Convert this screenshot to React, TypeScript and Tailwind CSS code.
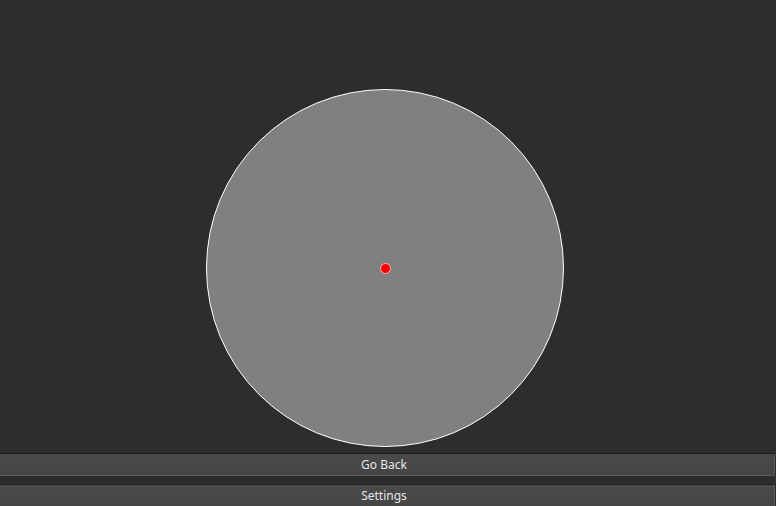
export default function App() {
  return (
    <div className="h-[506px] w-[776px] overflow-hidden bg-[#2d2d2d] flex flex-col font-['Noto_Sans',sans-serif]">
      {/* Canvas */}
      <div className="flex justify-center pr-[6px] pt-[89px]">
        <div className="w-[358px] h-[358px] rounded-full bg-[#808080] border border-white flex items-center justify-center">
          <div className="w-[11px] h-[11px] rounded-full bg-[#ff0000] border border-[#ffb0b0]" />
        </div>
      </div>

      {/* Buttons */}
      <div className="mt-[6px] flex flex-col gap-[8px] mr-px">
        <button className="h-[23px] w-full bg-gradient-to-b from-[#4a4a4a] to-[#454545] border-t border-t-[#1f1f1f] border-b border-b-[#5c5c5c] border-r border-r-[#5a5a5a] rounded-r-[2px] text-[12px] text-[#e6e6e6] leading-none pr-[6px] pt-px">
          Go Back
        </button>
        <button className="h-[23px] w-full bg-gradient-to-b from-[#4a4a4a] to-[#454545] border-t border-t-[#1f1f1f] border-b border-b-[#5c5c5c] border-r border-r-[#5a5a5a] rounded-r-[2px] text-[12px] text-[#e6e6e6] leading-none pr-[6px] pt-px">
          Settings
        </button>
      </div>
    </div>
  );
}
